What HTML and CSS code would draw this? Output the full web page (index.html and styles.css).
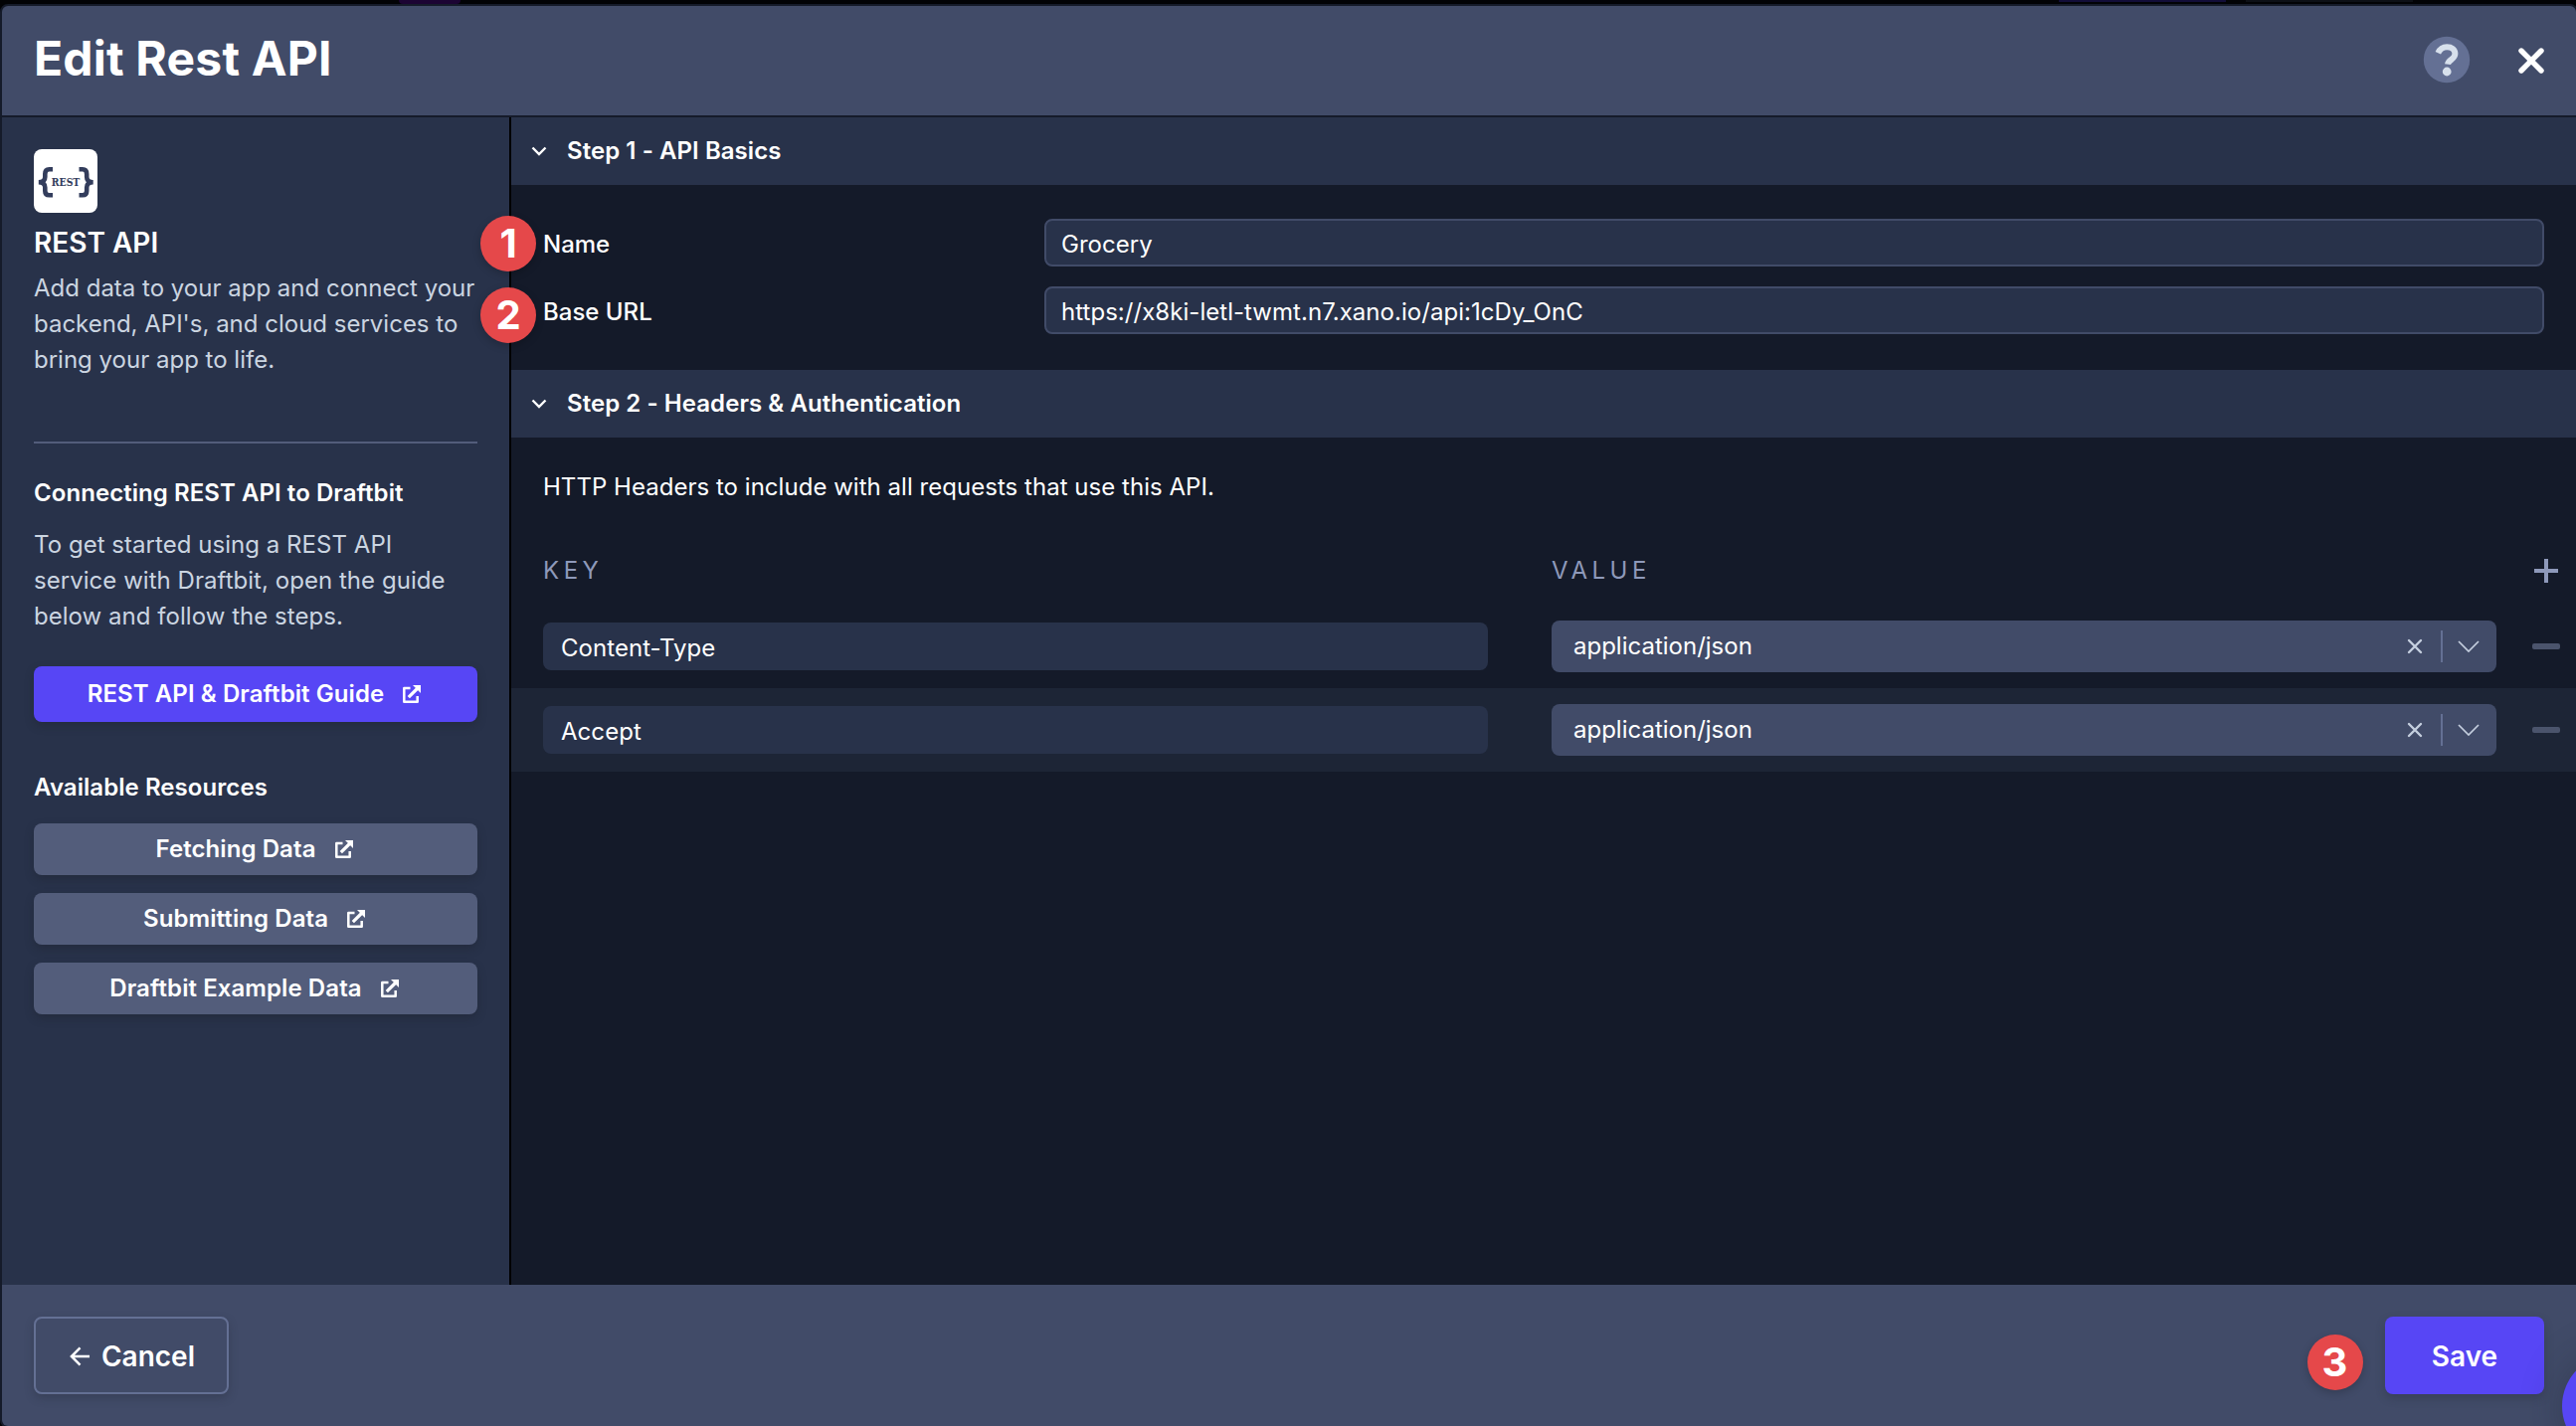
FILE: index.html
```html
<!DOCTYPE html>
<html lang="en">
<head>
<meta charset="utf-8">
<title>Edit Rest API</title>
<link rel="stylesheet" href="styles.css">
</head>
<body>
<svg class="sprite" width="0" height="0" aria-hidden="true">
  <symbol id="external" viewBox="0 0 20 20"><path d="M8.500 4H2.300v13.700h13.400V12" fill="none" stroke="currentColor" stroke-width="2.500" stroke-linejoin="round"/><path d="M6.800 13.200 16 4" stroke="currentColor" stroke-width="3.200"/><path d="M11 1H19v8z" fill="currentColor"/></symbol>
  <symbol id="chevron" viewBox="0 0 16 10"><path d="M1.500 1.500 8 8l6.500-6.500" fill="none" stroke="currentColor" stroke-width="2.400"/></symbol>
  <symbol id="clear" viewBox="0 0 16 16"><path d="M2 2l12 12M14 2 2 14" fill="none" stroke="currentColor" stroke-width="2.400" stroke-linecap="round"/></symbol>
  <symbol id="caret" viewBox="0 0 22 12"><path d="M1 1l10 10L21 1" fill="none" stroke="currentColor" stroke-width="1.700"/></symbol>
</svg>
<div class="page">
  <span class="backdrop backdrop-a"></span>
  <span class="backdrop backdrop-b"></span>
  <span class="backdrop backdrop-c"></span>
  <div class="modal">
    <header class="header">
      <h1>Edit Rest API</h1>
      <div class="header-actions">
        <svg class="help" viewBox="0 0 48 48"><circle cx="24" cy="24" r="23.200" fill="#647094"/><path d="M15.300 17.200C17 13.600 20 11.200 24.200 11.200c4.800 0 8.200 2.600 8.200 6.800 0 5.800-6.700 5.800-7.400 10.600" fill="none" stroke="#d7e0ec" stroke-width="6"/><circle cx="24.200" cy="36" r="4.400" fill="#d7e0ec"/></svg>
        <svg class="close" viewBox="0 0 26 26"><path d="M3 3l20 20M23 3 3 23" stroke="#fff" stroke-width="5.400" stroke-linecap="round"/></svg>
      </div>
    </header>
    <div class="body">
      <aside class="sidebar">
        <svg class="logo" viewBox="0 0 64 64">
          <path d="M19 20.300H15.500Q11.300 20.300 11.300 25V28Q11.300 33.300 4.800 33.300Q11.300 33.300 11.300 38.500V42Q11.300 46.300 15.500 46.300H19M45.500 20.300H49Q53.200 20.300 53.200 25V28Q53.200 33.300 59.700 33.300Q53.200 33.300 53.200 38.500V42Q53.200 46.300 49 46.300H45.500" fill="none" stroke="#333d5c" stroke-width="4.600"/>
          <text x="17.800" y="36.500" textLength="28.500" lengthAdjust="spacingAndGlyphs">REST</text>
        </svg>
        <h2>REST API</h2>
        <p>Add data to your app and connect your<br>backend, API's, and cloud services to<br>bring your app to life.</p>
        <hr>
        <h3>Connecting REST API to Draftbit</h3>
        <p class="guide-copy">To get started using a REST API<br>service with Draftbit, open the guide<br>below and follow the steps.</p>
        <a class="button primary">REST API &amp; Draftbit Guide<svg class="ext"><use href="#external"/></svg></a>
        <h3 class="resources-title">Available Resources</h3>
        <div class="resources">
          <a class="button">Fetching Data<svg class="ext"><use href="#external"/></svg></a>
          <a class="button">Submitting Data<svg class="ext"><use href="#external"/></svg></a>
          <a class="button">Draftbit Example Data<svg class="ext"><use href="#external"/></svg></a>
        </div>
      </aside>
      <main class="main">
        <div class="step"><svg class="chev"><use href="#chevron"/></svg>Step 1 - API Basics</div>
        <div class="basics">
          <div class="field"><label>Name</label><div class="input">Grocery</div></div>
          <div class="field"><label>Base URL</label><div class="input">https://x8ki-letl-twmt.n7.xano.io/api:1cDy_OnC</div></div>
        </div>
        <div class="step"><svg class="chev"><use href="#chevron"/></svg>Step 2 - Headers &amp; Authentication</div>
        <p class="note">HTTP Headers to include with all requests that use this API.</p>
        <div class="row head"><span>KEY</span><span>VALUE</span><i class="plus"></i></div>
        <div class="row">
          <div class="key">Content-Type</div>
          <div class="select"><span>application/json</span><svg class="clear"><use href="#clear"/></svg><i class="bar"></i><svg class="caret"><use href="#caret"/></svg></div>
          <i class="minus"></i>
        </div>
        <div class="row alt">
          <div class="key">Accept</div>
          <div class="select"><span>application/json</span><svg class="clear"><use href="#clear"/></svg><i class="bar"></i><svg class="caret"><use href="#caret"/></svg></div>
          <i class="minus"></i>
        </div>
      </main>
    </div>
    <footer class="footer">
      <button class="cancel"><svg viewBox="0 0 22 20"><path d="M21 10H2M11 1 2 10l9 9" fill="none" stroke="#fff" stroke-width="2.600"/></svg>Cancel</button>
      <button class="save">Save</button>
    </footer>
  </div>
  <span class="badge badge-1">1</span>
  <span class="badge badge-2">2</span>
  <span class="badge badge-3">3</span>
  <span class="chat"></span>
</div>
</body>
</html>
```
FILE: styles.css
```css
* { box-sizing: border-box; }
body { margin: 0; background: #020306; font-family: Inter, "Liberation Sans", sans-serif; font-size: 24px; color: #fff; }
h1, h2, h3, p { margin: 0; }
.sprite { position: absolute; }
.page { position: relative; width: 2590px; height: 1434px; overflow: hidden; padding-top: 4px; }
.backdrop { position: absolute; top: 0; }
.backdrop-a { left: 401px; width: 62px; height: 4px; background: #1c0433; border-radius: 0 0 6px 6px; }
.backdrop-b { left: 2070px; width: 168px; height: 2px; background: #120d38; }
.backdrop-c { left: 2258px; width: 168px; height: 2px; background: #0d1016; }
.modal { position: relative; display: flex; flex-direction: column; width: 2592px; height: 1432px; border: 2px solid #151b2a; border-radius: 8px; overflow: hidden; background: #141a29; }
.header { display: flex; justify-content: space-between; height: 112px; padding: 0 32px; background: #414b68; border-bottom: 2px solid #151b2a; flex: none; }
h1 { font-size: 48px; line-height: 58px; font-weight: 700; margin-top: 24px; letter-spacing: .2px; }
.header-actions { display: flex; align-items: flex-start; padding-top: 30px; gap: 48px; }
.help { width: 48px; height: 48px; }
.close { width: 26px; height: 26px; margin-top: 12px; }
.body { display: flex; height: 1174px; flex: none; }
.sidebar { width: 512px; flex: none; padding: 32px 32px 0; background: #28324a; border-right: 2px solid #000; }
.logo { display: block; width: 64px; height: 64px; border-radius: 8px; background: #fff; }
.logo text { font: 700 11px "DejaVu Serif", serif; fill: #333d5c; }
h2 { font-size: 28px; line-height: 34px; font-weight: 600; margin-top: 13px; }
.sidebar p { font-size: 24px; line-height: 36px; color: #cbd5e1; white-space: nowrap; margin-top: 11px; }
hr { height: 2px; margin: 64px 0 0; border: 0; background: #535d7b; }
h3 { font-size: 24px; line-height: 30px; font-weight: 600; margin-top: 35px; letter-spacing: .06px; }
.sidebar .guide-copy { margin-top: 19px; letter-spacing: .04px; }
.button { display: flex; align-items: center; justify-content: center; height: 52px; padding: 0 2px 1px 0; border-radius: 8px; background: #535d7b; font-size: 24px; font-weight: 600; letter-spacing: .08px; box-shadow: 0 4px 8px rgba(30,35,45,.4); }
.primary { height: 56px; margin-top: 32px; background: #5746f5; }
.ext { width: 20px; height: 20px; margin-left: 18px; }
.resources-title { margin-top: 51px; }
.resources { display: grid; gap: 18px; margin-top: 21px; }
.main { width: 2076px; flex: none; }
.step { display: flex; align-items: center; height: 68px; padding: 0 0 1px 20px; background: #28324a; font-weight: 600; letter-spacing: .06px; }
.chev { width: 16px; height: 10px; margin-right: 20px; }
.basics { display: grid; gap: 20px; padding: 34px 32px 36px; }
.field { display: grid; grid-template-columns: 504px 1508px; align-items: center; }
label { font-weight: 500; padding-top: 2px; }
.input { height: 48px; line-height: 47px; padding: 0 15px; background: #28324a; border: 2px solid #414b68; border-radius: 8px; letter-spacing: .04px; }
.note { line-height: 30px; margin: 35px 0 0 32px; letter-spacing: .03px; }
.row { display: grid; grid-template-columns: 950px 950px 28px; column-gap: 64px; align-items: center; height: 84px; padding-left: 32px; }
.row > :last-child { margin-left: -28px; }
.row.head { height: 102px; padding-top: 33px; color: #8e99ba; letter-spacing: 4.500px; margin-top: 1px; }
.key { height: 48px; line-height: 52px; padding-left: 18px; background: #28324a; border-radius: 8px; letter-spacing: .05px; }
.alt { background: #1d2536; }
.select { display: flex; align-items: center; height: 52px; padding: 0 17px 0 22px; background: #414b68; border-radius: 8px; }
.select span { flex: 1; padding-bottom: 1px; }
.clear { width: 16px; height: 16px; color: #c5cfdf; margin-right: 18px; }
.bar { width: 2px; height: 32px; background: #647094; margin-right: 15px; }
.caret { width: 22px; height: 12px; color: #c5cfdf; }
.minus { width: 28px; height: 6px; border-radius: 2px; background: #4b546c; }
.plus { width: 24px; height: 24px; background: linear-gradient(#8e99ba,#8e99ba) center/24px 4px no-repeat, linear-gradient(#8e99ba,#8e99ba) center/4px 24px no-repeat; transform: translateX(2px); }
.footer { display: flex; justify-content: space-between; align-items: flex-start; flex: 1; padding: 32px 32px 0; background: #414b68; }
button { display: flex; align-items: center; justify-content: center; height: 78px; border: 0; border-radius: 8px; color: #fff; font: 600 28px Inter, sans-serif; padding: 2px 0 0; box-shadow: 0 4px 8px rgba(40,45,60,.35); }
.cancel { width: 196px; gap: 11px; padding-left: 2px; border: 2px solid #647094; background: none; }
.cancel svg { width: 21px; height: 20px; }
.save { width: 160px; background: #5746f5; }
.badge { position: absolute; width: 56px; height: 56px; border-radius: 50%; background: #e5484a; font-size: 40px; font-weight: 700; line-height: 55px; text-align: center; box-shadow: 0 3px 8px rgba(0,0,0,.2); }
.badge-1 { left: 483px; top: 217px; }
.badge-2 { left: 483px; top: 289px; }
.badge-3 { left: 2319.500px; top: 1342px; }
.chat { position: absolute; left: 2576px; top: 1362px; width: 104px; height: 104px; border-radius: 50%; background: #5746f5; box-shadow: 0 2px 40px rgba(30,35,50,.35); }
```
